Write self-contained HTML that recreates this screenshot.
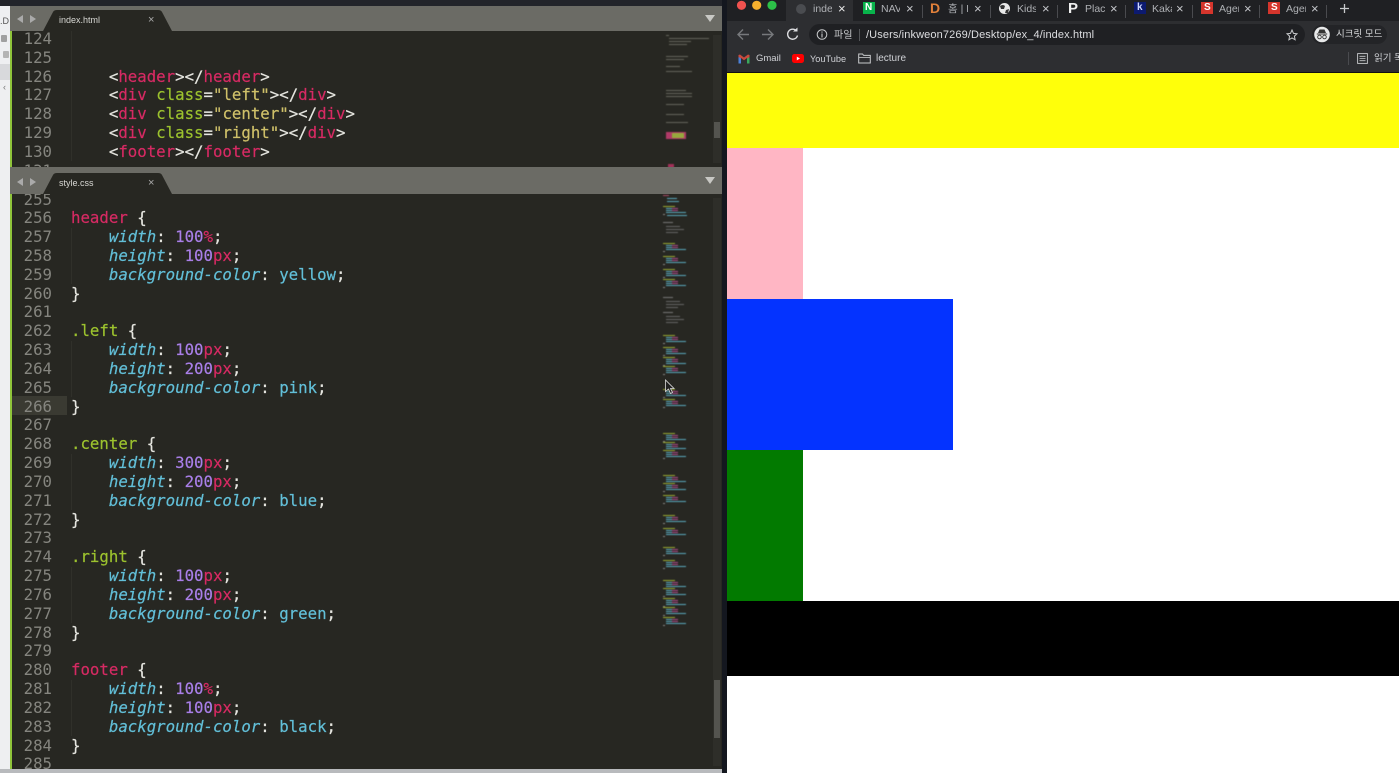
<!DOCTYPE html>
<html><head><meta charset="utf-8"><style>
html,body{margin:0;padding:0;width:1399px;height:773px;overflow:hidden;background:#fff}
div{position:absolute}
.code{position:absolute;left:0;margin:0;font:15.72px/18.83px "DejaVu Sans Mono",monospace;color:#e6e6e0;white-space:pre;filter:blur(.3px);-webkit-text-stroke:.2px}
.nums{position:absolute;left:12px;width:40px;margin:0;text-align:right;font:15.72px/18.83px "DejaVu Sans Mono",monospace;color:#85857f;white-space:pre;filter:blur(.3px)}
.t{color:#d62a63}.g{color:#9cc22e}.s{color:#cfc069}.c{color:#62bfd8;font-style:italic}.v{color:#62bfd8}.n{color:#a97fe8}
.ui{font-family:"Liberation Sans","Noto Sans CJK KR",sans-serif;position:absolute;white-space:nowrap}
.tt{top:2px;font-size:10.5px;line-height:14px;color:#aeb0b4;overflow:hidden;filter:blur(.25px)}
.x{top:1px;font-size:13px;line-height:15px;color:#c4c6ca}
.sep{top:5px;width:1px;height:13px;background:#4a4b4f}
.bm{top:51.5px;font-size:10px;line-height:14px;color:#d0d2d6;filter:blur(.2px)}
.tabname{font-family:"Liberation Sans",sans-serif;position:absolute;font-size:9px;line-height:12px;color:#d8d8d4}
.guide{left:59px;width:1px;height:56px;background:#30302a}
</style></head><body>

<!-- LEFT -->
<div style="left:0;top:0;width:727px;height:773px;background:#272722"></div>
<div style="left:0;top:0;width:727px;height:6px;background:#22242a"></div>
<div style="left:0;top:6px;width:10px;height:767px;background:#eeeff1"></div>
<div style="left:0;top:64px;width:10px;height:16px;background:#d8d9dc"></div>
<div class="ui" style="left:0;top:16px;font-size:9px;color:#555">.D</div>
<div style="left:1px;top:35px;width:6px;height:7px;background:#a0a0a0;border-radius:1px"></div>
<div style="left:3px;top:51px;width:6px;height:7px;background:#b4b4b4;border-radius:1px"></div>
<div class="ui" style="left:3px;top:82px;font-size:9px;color:#777">‹</div>
<div style="left:10px;top:31px;width:2px;height:738px;background:#8fc43a"></div>

<!-- top tab bar -->
<div style="left:10px;top:6px;width:712px;height:25px;background:#6b6b65"></div>
<svg style="position:absolute;left:40px;top:8px" width="140" height="24"><path d="M3 23 L13 4 Q14 2 17 2 L118 2 Q121 2 122 4 L132 23 Z" fill="#272722"/></svg>
<svg style="position:absolute;left:16px;top:14px" width="22" height="10"><path d="M1 5 L7 1 V9 Z" fill="#aaa"/><path d="M14 1 L20 5 L14 9 Z" fill="#aaa"/></svg>
<div class="tabname" style="left:59px;top:14px">index.html</div>
<div class="tabname" style="left:148px;top:14px;color:#aaa;font-size:11px">×</div>
<svg style="position:absolute;left:705px;top:15px" width="10" height="8"><path d="M0 0 H10 L5 7 Z" fill="#c8c8c4"/></svg>

<!-- top pane -->
<div style="left:12px;top:31px;width:710px;height:136px;overflow:hidden">
<div style="left:59px;top:0;width:1px;height:130px;background:#30302a"></div>
<pre class="nums" style="top:-1px;left:0">124
125
126
127
128
129
130
131</pre>
<pre class="code" style="top:-1px;left:59px">


    &lt;<span class="t">header</span>&gt;&lt;/<span class="t">header</span>&gt;
    &lt;<span class="t">div</span> <span class="g">class</span>=<span class="s">"left"</span>&gt;&lt;/<span class="t">div</span>&gt;
    &lt;<span class="t">div</span> <span class="g">class</span>=<span class="s">"center"</span>&gt;&lt;/<span class="t">div</span>&gt;
    &lt;<span class="t">div</span> <span class="g">class</span>=<span class="s">"right"</span>&gt;&lt;/<span class="t">div</span>&gt;
    &lt;<span class="t">footer</span>&gt;&lt;/<span class="t">footer</span>&gt;</pre>
</div>
<!-- top minimap -->
<div style="left:713px;top:35px;width:8px;height:128px;background:#2e2e29"></div>
<div style="left:714px;top:122px;width:6px;height:16px;background:#54544f"></div>
<svg style="position:absolute;left:664px;top:34px;filter:blur(.4px)" width="50" height="134">
<g fill="#77776c" opacity=".8"><rect x="2" y="1" width="3" height="1"/><rect x="5" y="4" width="40" height="1"/><rect x="5" y="7" width="22" height="1"/><rect x="5" y="10" width="18" height="1"/>
<rect x="2" y="22" width="22" height="1"/><rect x="2" y="25" width="18" height="1"/><rect x="2" y="32" width="14" height="1"/><rect x="2" y="37" width="26" height="1"/><rect x="2" y="56" width="20" height="1"/><rect x="2" y="59" width="26" height="1"/><rect x="2" y="62" width="26" height="1"/><rect x="2" y="70" width="18" height="1"/><rect x="2" y="80" width="18" height="1"/><rect x="2" y="88" width="22" height="1"/></g>
<rect x="2" y="98" width="20" height="7" fill="#b03a68"/><rect x="8" y="99" width="12" height="5" fill="#96a83c"/><rect x="4" y="130" width="6" height="4" fill="#a03058"/>
</svg>

<!-- second tab bar -->
<div style="left:10px;top:167px;width:712px;height:27px;background:#6b6b65"></div>
<svg style="position:absolute;left:40px;top:171px" width="140" height="24"><path d="M3 23 L13 4 Q14 2 17 2 L118 2 Q121 2 122 4 L132 23 Z" fill="#272722"/></svg>
<svg style="position:absolute;left:16px;top:177px" width="22" height="10"><path d="M1 5 L7 1 V9 Z" fill="#aaa"/><path d="M14 1 L20 5 L14 9 Z" fill="#aaa"/></svg>
<div class="tabname" style="left:59px;top:177px">style.css</div>
<div class="tabname" style="left:148px;top:177px;color:#aaa;font-size:11px">×</div>
<svg style="position:absolute;left:705px;top:177px" width="10" height="8"><path d="M0 0 H10 L5 7 Z" fill="#c8c8c4"/></svg>

<!-- bottom pane -->
<div style="left:12px;top:194px;width:710px;height:575px;overflow:hidden">
<div style="left:0;top:202px;width:55px;height:19px;background:#3a3a32"></div>
<div class="guide" style="top:34px"></div><div class="guide" style="top:147px"></div><div class="guide" style="top:260px"></div><div class="guide" style="top:373px"></div><div class="guide" style="top:486px"></div>
<pre class="nums" style="top:-3.5px;left:0">255
256
257
258
259
260
261
262
263
264
265
266
267
268
269
270
271
272
273
274
275
276
277
278
279
280
281
282
283
284
285</pre>
<pre class="code" style="top:-3.5px;left:59px">

<span class="t">header</span> {
    <span class="c">width</span>: <span class="n">100</span><span class="t">%</span>;
    <span class="c">height</span>: <span class="n">100</span><span class="t">px</span>;
    <span class="c">background-color</span>: <span class="v">yellow</span>;
}

<span class="g">.left</span> {
    <span class="c">width</span>: <span class="n">100</span><span class="t">px</span>;
    <span class="c">height</span>: <span class="n">200</span><span class="t">px</span>;
    <span class="c">background-color</span>: <span class="v">pink</span>;
}

<span class="g">.center</span> {
    <span class="c">width</span>: <span class="n">300</span><span class="t">px</span>;
    <span class="c">height</span>: <span class="n">200</span><span class="t">px</span>;
    <span class="c">background-color</span>: <span class="v">blue</span>;
}

<span class="g">.right</span> {
    <span class="c">width</span>: <span class="n">100</span><span class="t">px</span>;
    <span class="c">height</span>: <span class="n">200</span><span class="t">px</span>;
    <span class="c">background-color</span>: <span class="v">green</span>;
}

<span class="t">footer</span> {
    <span class="c">width</span>: <span class="n">100</span><span class="t">%</span>;
    <span class="c">height</span>: <span class="n">100</span><span class="t">px</span>;
    <span class="c">background-color</span>: <span class="v">black</span>;
}</pre>
</div>

<!-- bottom minimap -->
<div style="left:713px;top:198px;width:8px;height:568px;background:#2e2e29"></div>
<div style="left:714px;top:680px;width:6px;height:58px;background:#54544f"></div>
<svg style="position:absolute;left:660px;top:194px;filter:blur(.4px)" width="54" height="440">
<defs><g id="b"><rect x="3" y="0" width="12" height="1" fill="#9aac34"/><rect x="6" y="2" width="12" height="1" fill="#5aa8bc"/><rect x="12" y="2" width="6" height="1" fill="#a84a86"/><rect x="6" y="4" width="12" height="1" fill="#5aa8bc"/><rect x="12" y="4" width="6" height="1" fill="#a84a86"/><rect x="6" y="6" width="20" height="1" fill="#5aa8bc"/><rect x="3" y="8" width="2" height="1" fill="#888"/></g>
<g id="h"><rect x="3" y="0" width="10" height="1" fill="#777"/><rect x="6" y="4" width="14" height="1" fill="#666"/><rect x="6" y="7" width="18" height="1" fill="#666"/><rect x="6" y="10" width="12" height="1" fill="#666"/></g></defs>
<rect x="3" y="1" width="6" height="1" fill="#a84a66"/><rect x="7" y="4" width="10" height="1" fill="#5aa8bc"/><rect x="7" y="7" width="12" height="1" fill="#5aa8bc"/>
<use href="#b" y="12"/><rect x="7" y="21" width="20" height="1" fill="#5aa8bc"/>
<use href="#h" y="28"/>
<use href="#b" y="49"/><use href="#b" y="62"/><use href="#b" y="75"/><use href="#b" y="85"/>
<use href="#h" y="103"/><use href="#h" y="118"/>
<use href="#b" y="141"/><use href="#b" y="153"/><use href="#b" y="163"/><use href="#b" y="172"/><use href="#b" y="195"/><use href="#b" y="205"/>
<use href="#b" y="239"/><use href="#b" y="248"/><use href="#b" y="256"/>
<use href="#b" y="281"/><use href="#b" y="289"/><use href="#b" y="301"/>
<use href="#b" y="321"/><use href="#b" y="334"/>
<use href="#b" y="353"/><use href="#b" y="366"/>
<use href="#b" y="386"/><use href="#b" y="394"/><use href="#b" y="404"/><use href="#b" y="413"/><use href="#b" y="423"/>
</svg>
<svg style="position:absolute;left:664px;top:379px" width="12" height="16"><path d="M1.5 1 V12.5 L4.5 10 L6.5 14.5 L8.5 13.5 L6.5 9.5 L10 9.5 Z" fill="#222" stroke="#ddd" stroke-width=".8"/></svg>
<div style="left:0;top:769px;width:722px;height:4px;background:#b8babd"></div>
<div style="left:722px;top:0;width:5px;height:773px;background:#14171f"></div>

<!-- BROWSER -->
<div style="left:727px;top:0;width:672px;height:21px;background:#1f2023"></div>
<div style="left:727px;top:21px;width:672px;height:27px;background:#2d2e31"></div>
<div style="left:727px;top:48px;width:672px;height:24px;background:#2d2e31"></div>
<div style="left:727px;top:72px;width:672px;height:1px;background:#111"></div>
<svg style="position:absolute;left:727px;top:0" width="60" height="12"><circle cx="14.5" cy="5.3" r="4.6" fill="#f0524f"/><circle cx="29.7" cy="5.3" r="4.6" fill="#f5b02e"/><circle cx="45" cy="5.3" r="4.6" fill="#2cc048"/></svg>
<div style="left:786px;top:0;width:67px;height:21px;background:#2d2e31"></div>
<svg style="position:absolute;left:795px;top:3px" width="12" height="12"><circle cx="6" cy="6" r="5" fill="#4a4c50"/></svg>
<div class="ui tt" style="left:813px;width:19px">index</div><div class="ui x" style="left:838px;color:#e8e8e8">×</div>
<div style="left:863px;top:2px;width:12px;height:12px;background:#08b34b"></div><div class="ui" style="left:865px;top:1px;font-size:10px;line-height:14px;font-weight:bold;color:#fff">N</div>
<div class="ui tt" style="left:881px;width:19px">NAVER</div><div class="ui x" style="left:906px">×</div>
<div class="sep" style="left:922px"></div>
<div class="ui" style="left:930px;top:0;font-size:14px;line-height:17px;font-weight:bold;color:#e0803a">D</div>
<div class="ui tt" style="left:948px;width:20px">홈 | D</div><div class="ui x" style="left:974px">×</div>
<div class="sep" style="left:990px"></div>
<svg style="position:absolute;left:998px;top:2px" width="13" height="13"><circle cx="6.5" cy="6.5" r="5.5" fill="#e8e8e8"/><path d="M2 4 Q5 2 7 4 L6 7 L3 7 Z M8 8 L11 7 L10 11 L7 11 Z" fill="#333"/></svg>
<div class="ui tt" style="left:1017px;width:19px">Kids</div><div class="ui x" style="left:1042px">×</div>
<div class="sep" style="left:1057px"></div>
<div class="ui" style="left:1068px;top:0;font-size:15px;line-height:17px;font-weight:bold;color:#eee">P</div>
<div class="ui tt" style="left:1085px;width:20px">Place</div><div class="ui x" style="left:1110px">×</div>
<div class="sep" style="left:1125px"></div>
<div style="left:1134px;top:2px;width:12px;height:12px;background:#0c1a70"></div><div class="ui" style="left:1137px;top:1px;font-size:10px;line-height:14px;font-weight:bold;color:#cfd8ff">k</div>
<div class="ui tt" style="left:1152px;width:20px">Kakao</div><div class="ui x" style="left:1176px">×</div>
<div class="sep" style="left:1192px"></div>
<div style="left:1201px;top:2px;width:12px;height:12px;background:#d5352c"></div><div class="ui" style="left:1204px;top:1px;font-size:10px;line-height:14px;font-weight:bold;color:#fff">S</div>
<div class="ui tt" style="left:1219px;width:20px">Agen</div><div class="ui x" style="left:1244px">×</div>
<div class="sep" style="left:1259px"></div>
<div style="left:1268px;top:2px;width:12px;height:12px;background:#d5352c"></div><div class="ui" style="left:1271px;top:1px;font-size:10px;line-height:14px;font-weight:bold;color:#fff">S</div>
<div class="ui tt" style="left:1286px;width:20px">Agen</div><div class="ui x" style="left:1311px">×</div>
<div class="sep" style="left:1326px"></div>
<svg style="position:absolute;left:1339px;top:3px" width="11" height="11"><path d="M5.5 1 V10 M1 5.5 H10" stroke="#c8cacc" stroke-width="1.3"/></svg>

<svg style="position:absolute;left:736px;top:27px" width="66" height="15" fill="none"><path d="M13 7.5 H2 M7 2.5 L2 7.5 L7 12.5" stroke="#77797c" stroke-width="1.4"/><path d="M26 7.5 H37 M32 2.5 L37 7.5 L32 12.5" stroke="#77797c" stroke-width="1.4"/><path d="M60.5 4 A5 5 0 1 0 61.5 8.5" stroke="#dcdde0" stroke-width="1.4"/><path d="M57 4.5 H61.5 V0.5 Z" fill="#dcdde0"/></svg>
<div style="left:809px;top:24px;width:496px;height:21px;background:#1f2023;border-radius:11px"></div>
<svg style="position:absolute;left:816px;top:28px" width="12" height="13" fill="none"><circle cx="6" cy="6.5" r="4.8" stroke="#c8cacc" stroke-width="1"/><path d="M6 5.5 V9.5 M6 3.5 V4.6" stroke="#c8cacc" stroke-width="1.1"/></svg>
<div class="ui" style="left:834px;top:28px;font-size:10px;line-height:15px;color:#c8cacc">파일</div>
<div style="left:859px;top:29px;width:1px;height:12px;background:#55575a"></div>
<div class="ui" style="left:866px;top:28px;font-size:11px;line-height:15px;color:#dcdde0;letter-spacing:.12px">/Users/inkweon7269/Desktop/ex_4/index.html</div>
<svg style="position:absolute;left:1286px;top:29px" width="12" height="12" fill="none"><path d="M6 1 L7.5 4.4 L11 4.8 L8.4 7.2 L9.1 10.8 L6 9 L2.9 10.8 L3.6 7.2 L1 4.8 L4.5 4.4 Z" stroke="#c8cacc" stroke-width="1"/></svg>
<div style="left:1312px;top:25px;width:75px;height:19px;background:#232427;border-radius:10px"></div>
<svg style="position:absolute;left:1314px;top:26px" width="16" height="17"><circle cx="8" cy="8.5" r="7.8" fill="#e8e9ea"/><path d="M4 7 L5.5 3.5 H10.5 L12 7 Z M2.8 7.5 H13.2 V8.5 H2.8 Z" fill="#333"/><circle cx="5.5" cy="11" r="1.8" fill="none" stroke="#333" stroke-width=".9"/><circle cx="10.5" cy="11" r="1.8" fill="none" stroke="#333" stroke-width=".9"/></svg>
<div class="ui" style="left:1336px;top:27px;font-size:9.5px;line-height:15px;color:#d8dadc">시크릿 모드</div>

<svg style="position:absolute;left:738px;top:54px" width="12" height="10"><path d="M0.5 1 V9.5 H3 V4 L6 6.3 L9 4 V9.5 H11.5 V1 L10 .5 L6 3.5 L2 .5 Z" fill="#c94a3e"/><path d="M.5 9.5 V3 L3 4.5 V9.5 Z" fill="#4a80d8"/><path d="M11.5 9.5 V3 L9 4.5 V9.5 Z" fill="#3aa85c"/></svg>
<div class="ui bm" style="left:756px;font-size:9.5px">Gmail</div>
<svg style="position:absolute;left:792px;top:54px" width="12" height="9"><rect x="0" y="0" width="12" height="9" rx="2.4" fill="#f00"/><path d="M4.8 2.6 L8 4.5 L4.8 6.4 Z" fill="#fff"/></svg>
<div class="ui bm" style="left:810px;font-size:9.2px">YouTube</div>
<svg style="position:absolute;left:858px;top:53px" width="13" height="11" fill="none"><path d="M.7 10 V1 H4.5 L5.7 2.4 H12.3 V10 Z" stroke="#c8cacc" stroke-width="1"/><path d="M1 4.4 H12" stroke="#c8cacc" stroke-width=".8"/></svg>
<div class="ui bm" style="left:876px">lecture</div>
<div style="left:1348px;top:52px;width:1px;height:13px;background:#4a4b4f"></div>
<svg style="position:absolute;left:1357px;top:53px" width="11" height="11" fill="none"><rect x=".6" y=".6" width="9.8" height="9.8" stroke="#c8cacc" stroke-width=".9"/><path d="M2.5 3.3 H8.5 M2.5 5.5 H8.5 M2.5 7.7 H8.5" stroke="#c8cacc" stroke-width=".8"/></svg>
<div class="ui bm" style="left:1374px;color:#d0d2d6;font-size:9.5px">읽기 목록</div>

<!-- page -->
<div style="left:727px;top:73px;width:672px;height:700px;background:#fff"></div>
<div style="left:727px;top:73px;width:672px;height:75px;background:#ffff0a"></div>
<div style="left:727px;top:148px;width:76px;height:151px;background:#ffb6c4"></div>
<div style="left:727px;top:299px;width:226px;height:151px;background:#0433ff"></div>
<div style="left:727px;top:450px;width:76px;height:151px;background:#027a00"></div>
<div style="left:727px;top:601px;width:672px;height:75px;background:#000"></div>
</body></html>
